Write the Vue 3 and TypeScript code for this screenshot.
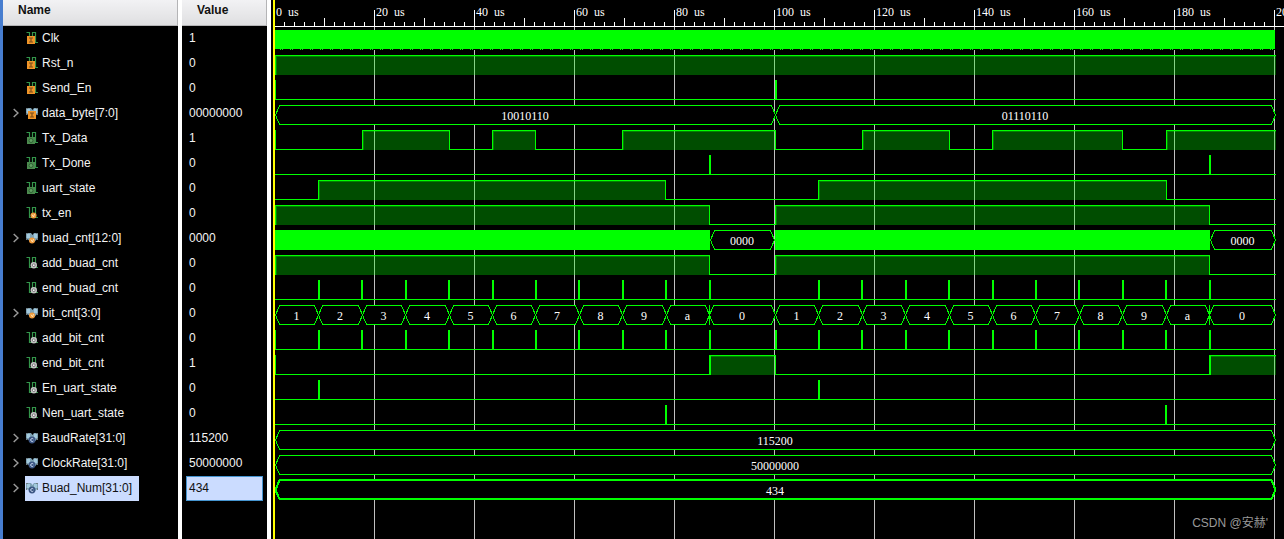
<script setup lang="ts">
type Badge = 'input' | 'output' | 'reg' | 'wire' | 'const'

interface Span {
  from: number
  to: number
  label: string
}

interface Signal {
  name: string
  value: string
  badge: Badge
  bus?: boolean
  selected?: boolean
  solid?: [number, number][]
  clock?: boolean
  high?: [number, number][]
  spans?: Span[]
  pulses?: number[]
  marks?: number[]
  startEdge?: boolean
}

/* Horizontal canvas units: 5 px per microsecond, time zero at ORIGIN. */
const ORIGIN = 3
const START = 4
const END = 1005
const SECOND = 504
const ROW = 25
const RULER = 26
const BIT = 43.4

const bitEdges = (base: number): number[] =>
  Array.from({ length: 10 }, (_, k) => Math.floor(base + BIT * (k + 1) + 0.01))
const first = bitEdges(START)
const second = bitEdges(SECOND)
const edges = [...first, ...second]
const level = (base: number, k: number): number => Math.round(base + BIT * k)

const frame = (base: number, end: number): Span[] => {
  const digits = ['1', '2', '3', '4', '5', '6', '7', '8', '9', 'a', '0']
  return digits.map((label, k) => ({
    label,
    from: level(base, k),
    to: k === 10 ? end : level(base, k + 1),
  }))
}

const whole = (label: string): Span[] => [{ from: START, to: END - 1, label }]
const active: [number, number][] = [[START, 438], [SECOND, 938]]

const signals: Signal[] = [
  { name: 'Clk', value: '1', badge: 'input', clock: true, solid: [[START, END - 1]] },
  { name: 'Rst_n', value: '0', badge: 'input', high: [[START, END]], startEdge: true },
  { name: 'Send_En', value: '0', badge: 'input', pulses: [SECOND], startEdge: true },
  {
    name: 'data_byte[7:0]', value: '00000000', badge: 'input', bus: true,
    spans: [
      { from: START, to: SECOND, label: '10010110' },
      { from: SECOND, to: END - 1, label: '01110110' },
    ],
  },
  {
    name: 'Tx_Data', value: '1', badge: 'output', startEdge: true,
    high: [[91, 178], [221, 264], [351, 504], [591, 678], [721, 851], [895, END]],
  },
  { name: 'Tx_Done', value: '0', badge: 'output', pulses: [438, 938] },
  { name: 'uart_state', value: '0', badge: 'output', high: [[47, 394], [547, 895]] },
  { name: 'tx_en', value: '0', badge: 'reg', high: active, startEdge: true },
  {
    name: 'buad_cnt[12:0]', value: '0000', badge: 'reg', bus: true,
    solid: [[START, 439], [SECOND, 939]],
    spans: [
      { from: 439, to: SECOND - 1, label: '0000' },
      { from: 939, to: END - 1, label: '0000' },
    ],
  },
  { name: 'add_buad_cnt', value: '0', badge: 'wire', high: active, startEdge: true },
  { name: 'end_buad_cnt', value: '0', badge: 'wire', pulses: edges },
  {
    name: 'bit_cnt[3:0]', value: '0', badge: 'reg', bus: true,
    spans: [...frame(START, SECOND), ...frame(SECOND, END - 1)], marks: [438, 938],
  },
  { name: 'add_bit_cnt', value: '0', badge: 'wire', pulses: [...edges, SECOND], startEdge: true },
  {
    name: 'end_bit_cnt', value: '1', badge: 'wire', startEdge: true,
    high: [[438, 504], [938, END]], marks: [439, 939],
  },
  { name: 'En_uart_state', value: '0', badge: 'wire', pulses: [47, 547] },
  { name: 'Nen_uart_state', value: '0', badge: 'wire', pulses: [394, 894] },
  { name: 'BaudRate[31:0]', value: '115200', badge: 'const', bus: true, spans: whole('115200') },
  { name: 'ClockRate[31:0]', value: '50000000', badge: 'const', bus: true, spans: whole('50000000') },
  {
    name: 'Buad_Num[31:0]', value: '434', badge: 'const', bus: true, selected: true,
    spans: whole('434'),
  },
]

const ticks = Array.from({ length: 101 }, (_, i) => {
  const us = i * 2
  const height = us % 20 === 0 ? 16 : us % 10 === 0 ? 8 : 4
  return { us, x: ORIGIN + us * 5, height }
}).filter((t) => t.us > 0)
const majors = Array.from({ length: 11 }, (_, i) => ({ us: i * 20, x: ORIGIN + i * 100 }))
const clockDots = Array.from({ length: 100 }, (_, i) => START + 5 + i * 10)

/* Step outline along pixel centres, so that each edge is one crisp pixel. */
const stepPath = (s: Signal): string => {
  let d = `M${START} 23.5`
  for (const [a, b] of s.high ?? []) {
    d += `H${a + 0.5}V4.5H${b === END ? END : b + 0.5}`
    if (b !== END) d += 'V23.5'
  }
  const last = s.high?.[s.high.length - 1]
  return last && last[1] === END ? d : `${d}H${END}`
}

const hexPath = ({ from, to }: Span, thick?: boolean): string => {
  const o = thick ? 0 : 0.5
  const top = 4 + o
  const bottom = 23 + o
  const mid = 14
  const a = from + 0.5
  const b = to + 0.5
  return `M${a} ${mid}L${a + 4} ${top}H${b - 4}L${b} ${mid}L${b - 4} ${bottom}H${a + 4}Z`
}
</script>

<template>
  <main class="viewer">
    <section class="pane names" aria-label="Signal names">
      <header class="head">Name</header>
      <ul class="rows">
        <li v-for="s in signals" :key="s.name" class="row">
          <button v-if="s.bus" class="expander" type="button" :aria-label="`Expand ${s.name}`">
            <svg width="6" height="10" viewBox="0 0 6 10"><path d="M.7 1 5 5 .7 9" /></svg>
          </button>
          <span v-else class="expander"></span>
          <span class="entry" :class="{ picked: s.selected }">
            <svg class="icon" width="13" height="13" viewBox="0 0 13 13" aria-hidden="true">
              <template v-if="s.bus">
                <path d="M0 1h5l1.500 2L8 1h4v6.500h-1.500L8.500 10h-4L2 7.500H0z" fill="#7fa3b5" />
                <path d="M1 2h3v4H1zM8 2h3v4H8z" fill="#a3c9dc" />
                <path d="M0 1h2v1H0zM10 1h2v1h-2zM0 6h1v2H0zM11 6h1v2h-1z" fill="#707d84" />
              </template>
              <path v-else d="M.5 .5h3v10h3V.5h3v10h2.500" fill="none" stroke="#33964a" stroke-width="1.200" />
              <template v-if="s.badge === 'input'">
                <rect :x="s.bus ? 2 : 1" y="4" width="8" height="8" fill="#f09528" />
                <path :transform="s.bus ? 'translate(1 0)' : undefined" d="M3 6h4M5 6v4M3 10h4" stroke="#7c4f1c" fill="none" stroke-width="1.200" />
              </template>
              <template v-else-if="s.badge === 'output'">
                <rect x="1" y="5" width="8" height="7" fill="#4c8a4e" />
                <circle cx="5" cy="8.500" r="2" fill="#619f62" stroke="#2f6334" />
              </template>
              <template v-else-if="s.badge === 'reg'">
                <circle :cx="s.bus ? 6 : 7.500" cy="8.500" r="3" fill="#f09a3a" />
                <path :transform="s.bus ? 'translate(-1 0)' : undefined" d="M6 7.500 7.500 10 8.500 7" fill="none" stroke="#ffe0b0" />
              </template>
              <template v-else-if="s.badge === 'wire'">
                <circle cx="7.800" cy="8.200" r="3.200" fill="#c4c4c4" />
                <circle cx="7.800" cy="8.200" r="1.400" fill="#f4f4f4" stroke="#777" />
              </template>
              <template v-else>
                <circle cx="6" cy="8" r="3.400" fill="#3b5583" />
                <path d="M7.300 7a1.500 1.500 0 1 0 0 2" fill="none" stroke="#c6d5ee" />
              </template>
            </svg>
            <span>{{ s.name }}</span>
          </span>
        </li>
      </ul>
    </section>

    <section class="pane values" aria-label="Signal values">
      <header class="head">Value</header>
      <ul class="rows">
        <li v-for="s in signals" :key="s.name" class="row">
          <span class="value" :class="{ picked: s.selected }">{{ s.value }}</span>
        </li>
      </ul>
    </section>

    <section class="waves" aria-label="Waveforms">
      <svg class="canvas" shape-rendering="crispEdges">
        <rect v-for="m in majors" v-show="m.us > 0" :key="m.us" class="grid" :x="m.x" :y="RULER" width="1" height="100%" />

        <g class="ruler">
          <rect :x="START" :y="RULER" width="100%" height="1" />
          <rect v-for="t in ticks" :key="t.us" :x="t.x" :y="RULER - t.height" width="1" :height="t.height" />
          <text v-for="m in majors" :key="m.us" :x="m.x + 2" y="16">{{ m.us }} <tspan dx="3">us</tspan></text>
        </g>

        <g v-for="(s, i) in signals" :key="s.name" :transform="`translate(0 ${RULER + i * ROW})`">
          <template v-if="s.clock">
            <rect class="mask" :x="START" y="23" :width="END - START" height="1" />
            <template v-for="x in clockDots" :key="x">
              <rect class="solid" :x="x" y="23" width="1" height="1" />
              <rect class="solid" :x="x + 2" y="23" width="1" height="1" />
            </template>
          </template>
          <template v-if="!s.bus && !s.clock">
            <template v-for="[a, b] in s.high ?? []" :key="a">
              <rect class="fill" :x="a" y="4" :width="b - a" height="20" />
              <rect class="fill" :x="a + 1" y="5" :width="b - a - 1" height="1" />
              <rect class="fill" :x="a + 1" y="6" width="1" height="18" />
            </template>
            <path class="line" :d="stepPath(s)" />
          </template>
          <rect v-for="[a, b] in s.solid ?? []" :key="a" class="solid" :x="a" y="4" :width="b - a" :height="s.clock ? 19 : 20" />
          <template v-for="p in s.spans ?? []" :key="p.from">
            <path class="bus" :class="{ thick: s.selected }" :d="hexPath(p, s.selected)" />
            <text :x="(p.from + p.to) / 2" y="19" text-anchor="middle">{{ p.label }}</text>
          </template>
          <rect v-for="x in s.pulses ?? []" :key="x" class="solid" :x="x" y="4" width="2" height="19" />
          <rect v-for="x in s.marks ?? []" :key="x" class="solid" :x="x" y="4" width="1" height="20" />
          <rect v-if="s.startEdge" class="solid" :x="START" y="4" width="1" height="20" />
        </g>

        <rect class="cursor" x="2" y="0" width="2" height="100%" />
      </svg>
      <span class="credit">CSDN @安赫'</span>
    </section>
  </main>
</template>

<style>
html,
body {
  background: #000;
}
</style>

<style scoped>
.viewer {
  display: grid;
  grid-template-columns: 175px 85px minmax(0, 1fr);
  column-gap: 4px;
  min-height: 100vh;
  box-sizing: border-box;
  border-left: 3px solid #477dcf;
  background: #fff;
  color: #f4f4f4;
  font: 12px/24px "Liberation Sans", Arial, sans-serif;
}

.pane,
.waves {
  background: #000;
}

.head {
  box-sizing: border-box;
  height: 26px;
  padding: 0 15px;
  border: solid #b4b4b6;
  border-width: 0 1px 1px 0;
  background: linear-gradient(#f2f2f4, #dfdfe1);
  color: #111;
  font-weight: bold;
  line-height: 20px;
}

.rows {
  margin: 0;
  padding: 0;
  list-style: none;
}

.row {
  display: flex;
  height: 25px;
  white-space: nowrap;
}

.expander {
  display: flex;
  align-items: center;
  justify-content: center;
  width: 22px;
  height: 24px;
  padding: 0 0 0 4px;
  box-sizing: border-box;
  border: 0;
  background: none;
}

.expander path {
  fill: none;
  stroke: #999;
  stroke-width: 1.5;
}

.entry {
  display: flex;
  align-items: flex-start;
  gap: 3px;
  padding: 0 7px 0 1px;
}

.icon {
  margin-top: 6px;
}

.entry.picked,
.value.picked {
  background: #cbdcff;
  color: #111;
}

.value {
  flex: 1;
  box-sizing: border-box;
  margin: 0 4px;
  padding: 0 3px;
}

.value.picked {
  padding: 0 2px;
  border: 1px solid #4594cf;
  line-height: 22px;
}

.waves {
  position: relative;
  display: flex;
  min-width: 0;
}

.canvas {
  flex: 1;
  width: 100%;
  min-height: 501px;
  overflow: hidden;
}

.canvas text {
  fill: #fff;
  font: 12px "Liberation Serif", "Times New Roman", serif;
}

.grid {
  fill: #c0c0c0;
}

.ruler rect {
  fill: #fff;
}

.mask {
  fill: #000;
}

.solid {
  fill: #0f0;
}

.fill {
  fill: #0f0;
  fill-opacity: 0.3;
}

.line {
  fill: none;
  stroke: #0f0;
}

.bus {
  fill: #000;
  stroke: #0f0;
}

.thick {
  stroke-width: 2;
}

.cursor {
  fill: #ff0;
}

.credit {
  position: absolute;
  right: 16px;
  bottom: 4px;
  color: #999;
  font-family: "Liberation Sans", "Noto Sans CJK SC", sans-serif;
}
</style>
